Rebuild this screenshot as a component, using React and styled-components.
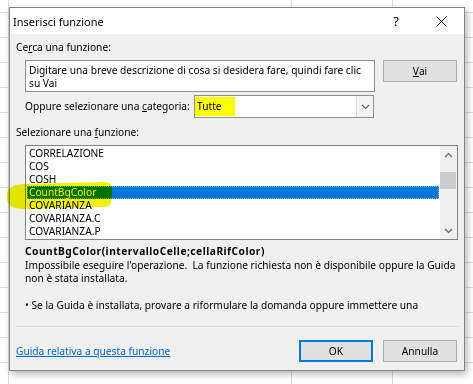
import React from "react"
import styled, { createGlobalStyle } from "styled-components"

const GlobalStyle = createGlobalStyle`
  html, body {
    margin: 0;
    padding: 0;
  }
  body {
    width: 473px;
    height: 384px;
    overflow: hidden;
    font-family: "Noto Sans", "Segoe UI", sans-serif;
    background-color: #fff;
    background-image:
      linear-gradient(#dadada, #dadada),
      linear-gradient(#dadada, #dadada),
      linear-gradient(#dadada, #dadada),
      repeating-linear-gradient(
        to bottom,
        transparent 0,
        transparent 12px,
        #dadada 12px,
        #dadada 13px,
        transparent 13px,
        transparent 25px
      );
    background-size: 1px 100%, 1px 100%, 1px 100%, 100% 100%;
    background-position: 8px 0, 291px 0, 392px 0, 0 0;
    background-repeat: no-repeat;
  }
`

const Desktop = styled.div`
  padding: 7px 0 0 9px;
`

const Dialog = styled.div`
  width: 456px;
  height: 364px;
  box-sizing: border-box;
  border: 1px solid #858585;
  background: #f0f0f0;
  box-shadow: 2px 3px 7px rgba(0, 0, 0, 0.3);
  display: flex;
  flex-direction: column;
  font-size: 10.2px;
  line-height: 13px;
  color: #000;
`

const TitleBar = styled.div`
  height: 26px;
  flex: none;
  background: #fff;
  display: flex;
  align-items: center;
  padding-left: 3px;
`

const Title = styled.div`
  font-size: 11px;
  flex: 1;
`

const TitleButton = styled.div`
  width: ${p => p.w}px;
  height: 26px;
  display: flex;
  align-items: center;
  justify-content: center;
  font-size: 13px;
`

const Body = styled.div`
  flex: 1;
  display: flex;
  flex-direction: column;
  padding: 7px 7px 0 6px;
`

const Label = styled.div`
  height: 13px;
  margin-top: ${p => p.mt || 0}px;
  white-space: nowrap;
`

const SearchRow = styled.div`
  display: flex;
  align-items: flex-start;
  gap: 8px;
  margin: 6px 0 0 9px;
`

const SearchBox = styled.div`
  width: 350px;
  height: 32px;
  box-sizing: border-box;
  border: 1px solid #8f8f8f;
  background: #fff;
  padding: 3px 3px 0;
  line-height: 13px;
  white-space: nowrap;
  overflow: hidden;
`

const Button = styled.div`
  width: 74px;
  height: 22px;
  box-sizing: border-box;
  border: 1px solid ${p => (p.primary ? "#0078d7" : "#adadad")};
  box-shadow: ${p => (p.primary ? "inset 0 0 0 1px #0078d7" : "none")};
  background: #e1e1e1;
  display: flex;
  align-items: center;
  justify-content: center;
`

const CategoryRow = styled.div`
  display: flex;
  align-items: center;
  margin: 3px 0 0 9px;
`

const CategoryLabel = styled.div`
  width: 169px;
  white-space: nowrap;
`

const Select = styled.div`
  width: 180px;
  height: 23px;
  box-sizing: border-box;
  border: 1px solid #8f8f8f;
  background: #fff;
  display: flex;
  align-items: center;
`

const SelectValue = styled.div`
  flex: 1;
  height: 100%;
  display: flex;
  align-items: center;
`

const Mark = styled.span`
  width: 40px;
  height: 19px;
  box-sizing: border-box;
  padding-left: 2px;
  background: #ffff00;
  display: flex;
  align-items: center;
`

const DropButton = styled.div`
  width: 17px;
  height: 21px;
  box-sizing: border-box;
  border-left: 1px solid #d9d9d9;
  background: #f4f4f4;
  display: flex;
  align-items: center;
  justify-content: center;
`

const ListBox = styled.div`
  position: relative;
  width: 433px;
  height: 95px;
  box-sizing: border-box;
  margin: 6px 0 0 9px;
  border: 1px solid #828282;
  background: #fff;
  display: flex;
`

const Items = styled.div`
  flex: 1;
  padding-top: 1px;
`

const Item = styled.div`
  height: 13px;
  line-height: 13px;
  margin: 0 1px;
  padding-left: 2px;
  white-space: nowrap;
  background: ${p => (p.selected ? "#0078d7" : "transparent")};
  color: ${p => (p.selected ? "#fff" : "#000")};
  outline: ${p => (p.selected ? "1px dotted rgba(255,255,255,0.5)" : "none")};
  outline-offset: -1px;
`

const ScrollBar = styled.div`
  width: 17px;
  background: #f0f0f0;
  display: flex;
  flex-direction: column;
`

const ScrollArrow = styled.div`
  height: 17px;
  display: flex;
  align-items: center;
  justify-content: center;
`

const Track = styled.div`
  flex: 1;
  padding-top: 9px;
`

const Thumb = styled.div`
  height: 17px;
  margin: 0 1px 0 0;
  background: #cdcdcd;
`

const Highlighter = styled.svg`
  position: absolute;
  left: -20px;
  top: 35px;
  mix-blend-mode: multiply;
  pointer-events: none;
`

const Details = styled.div`
  margin: 5px 0 0 9px;
  white-space: nowrap;
  overflow: hidden;
`

const Signature = styled.div`
  font-weight: 700;
  height: 13px;
  letter-spacing: 0.5px;
`

const Line = styled.div`
  height: 13px;
  margin-top: ${p => p.mt || 0}px;
`

const Separator = styled.div`
  height: 1px;
  background: #dcdcdc;
  margin: 14px -2px 0 0;
`

const Footer = styled.div`
  display: flex;
  align-items: center;
  gap: 10px;
  margin-top: 13px;
  height: 22px;
`

const Link = styled.a`
  flex: 1;
  color: #0066cc;
  text-decoration: underline;
  white-space: nowrap;
`

const Chevron = ({ up }) => (
  <svg width="9" height="6" viewBox="0 0 9 6">
    <path
      d={up ? "M1 5 L4.5 1.5 L8 5" : "M1 1 L4.5 4.5 L8 1"}
      fill="none"
      stroke="#606060"
      strokeWidth="1.2"
    />
  </svg>
)

const items = [
  "CORRELAZIONE",
  "COS",
  "COSH",
  "CountBgColor",
  "COVARIANZA",
  "COVARIANZA.C",
  "COVARIANZA.P",
]

export default function App() {
  return (
    <>
      <GlobalStyle />
      <Desktop>
        <Dialog>
          <TitleBar>
            <Title>Inserisci funzione</Title>
            <TitleButton w={44}>?</TitleButton>
            <TitleButton w={46}>
              <svg width="11" height="11" viewBox="0 0 11 11">
                <path d="M0.5 0.5 L10.5 10.5 M10.5 0.5 L0.5 10.5" stroke="#000" strokeWidth="1" />
              </svg>
            </TitleButton>
          </TitleBar>
          <Body>
            <Label>
              Ce<u>r</u>ca una funzione:
            </Label>
            <SearchRow>
              <SearchBox>
                Digitare una breve descrizione di cosa si desidera fare, quindi fare clic
                <br />
                su Vai
              </SearchBox>
              <Button>
                <u>V</u>ai
              </Button>
            </SearchRow>
            <CategoryRow>
              <CategoryLabel>
                Oppure selezionare una <u>c</u>ategoria:
              </CategoryLabel>
              <Select>
                <SelectValue>
                  <Mark>Tutte</Mark>
                </SelectValue>
                <DropButton>
                  <Chevron />
                </DropButton>
              </Select>
            </CategoryRow>
            <Label mt={8}>
              Selezionare una <u>f</u>unzione:
            </Label>
            <ListBox>
              <Items>
                {items.map(name => (
                  <Item key={name} selected={name === "CountBgColor"}>
                    {name}
                  </Item>
                ))}
              </Items>
              <ScrollBar>
                <ScrollArrow>
                  <Chevron up />
                </ScrollArrow>
                <Track>
                  <Thumb />
                </Track>
                <ScrollArrow>
                  <Chevron />
                </ScrollArrow>
              </ScrollBar>
              <Highlighter width="110" height="30" viewBox="5 180 110 30">
                <path
                  d="M6 196 C5 187 12 183 24 183 L104 181 C110 181 112 186 111 193 L110 201 C109 206 104 206 98 206 L24 208 C10 208 6 204 6 196 Z"
                  fill="#f2f200"
                />
              </Highlighter>
            </ListBox>
            <Details>
              <Signature>CountBgColor(intervalloCelle;cellaRifColor)</Signature>
              <Line mt={1}>
                Impossibile eseguire l'operazione.&nbsp; La funzione richiesta non è disponibile oppure la Guida
              </Line>
              <Line>non è stata installata.</Line>
              <Line mt={14}>• Se la Guida è installata, provare a riformulare la domanda oppure immettere una</Line>
            </Details>
            <Separator />
            <Footer>
              <Link>Guida relativa a questa funzione</Link>
              <Button primary>OK</Button>
              <Button>Annulla</Button>
            </Footer>
          </Body>
        </Dialog>
      </Desktop>
    </>
  )
}
